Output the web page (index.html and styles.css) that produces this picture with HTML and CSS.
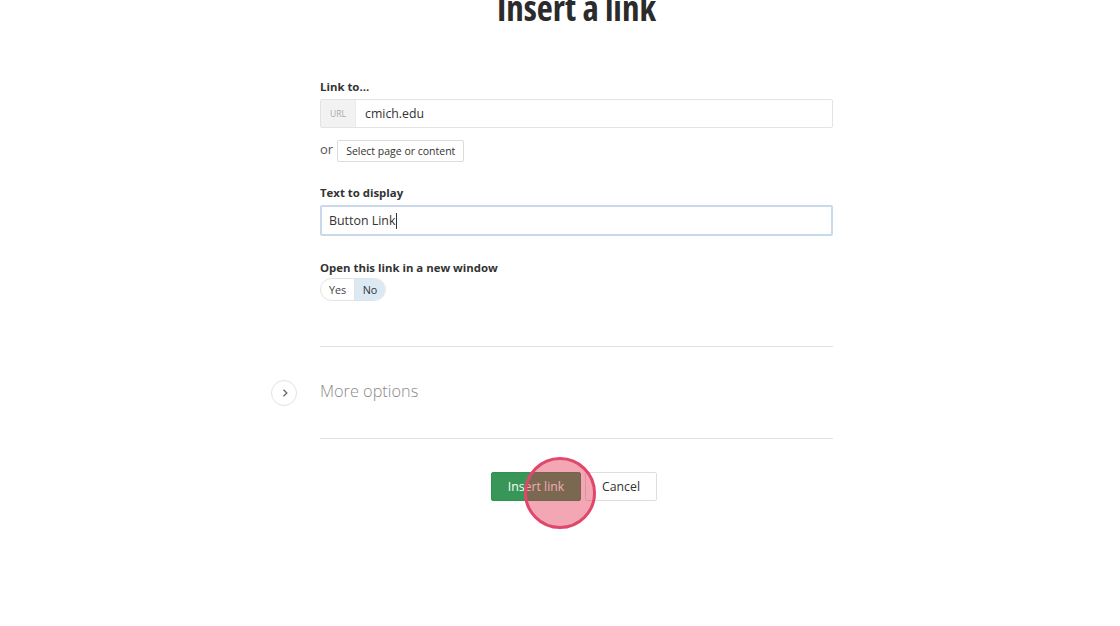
FILE: index.html
```html
<!DOCTYPE html>
<html>
<head>
<meta charset="utf-8">
<link rel="stylesheet" href="styles.css">
</head>
<body>
<div class="page">
  <h1 class="title">Insert a link</h1>
  <div class="form">
    <div class="field">
      <label class="label">Link to...</label>
      <div class="input-group">
        <span class="addon">URL</span>
        <span class="input-text">cmich.edu</span>
      </div>
      <div class="or-row">
        <span class="or">or</span>
        <span class="small-btn">Select page or content</span>
      </div>
    </div>
    <div class="field field-2">
      <label class="label">Text to display</label>
      <div class="input focused"><span class="input-text">Button Link</span><span class="caret"></span></div>
    </div>
    <div class="field field-3">
      <label class="label">Open this link in a new window</label>
      <div class="toggle">
        <span class="opt">Yes</span>
        <span class="opt active">No</span>
      </div>
    </div>
    <div class="more">
      <span class="more-icon">
        <svg width="10" height="10" viewBox="0 0 10 10"><path d="M3.5 1.8 L6.8 5 L3.5 8.2" fill="none" stroke="#666" stroke-width="1.3"/></svg>
      </span>
      <span class="more-text">More options</span>
    </div>
    <div class="actions">
      <span class="btn btn-primary">Insert link</span>
      <span class="btn btn-default">Cancel</span>
      <span class="click-marker"></span>
    </div>
  </div>
</div>
</body>
</html>
```

FILE: styles.css
```css
html, body {
  margin: 0;
  padding: 0;
  background: #fff;
}
body {
  font-family: "Open Sans", "Liberation Sans", sans-serif;
  color: #333;
  width: 1120px;
  height: 626px;
  overflow: hidden;
}
.page {
  display: flex;
  flex-direction: column;
  align-items: center;
  padding-left: 33px;
}
.title {
  margin: -14px 0 0 0;
  font-size: 35px;
  font-weight: 700;
  font-stretch: 75%;
  line-height: 44px;
  color: #2b2b2b;
}
.form {
  width: 513px;
  margin-top: 48px;
  position: relative;
}
.field {
  display: flex;
  flex-direction: column;
}
.label {
  font-size: 11.4px;
  font-weight: 700;
  line-height: 18px;
  color: #333;
  margin-bottom: 3px;
}
.input-group {
  display: flex;
  height: 29px;
  border: 1px solid #e3e3e3;
  border-radius: 2px;
  box-sizing: border-box;
}
.addon {
  width: 34px;
  background: #f2f2f2;
  color: #aaa;
  font-size: 8.5px;
  display: flex;
  align-items: center;
  justify-content: center;
  border-right: 1px solid #eaeaea;
}
.input-group .input-text {
  padding-left: 9px;
  font-size: 12.3px;
  line-height: 27px;
  color: #333;
}
.or-row {
  display: flex;
  align-items: center;
  margin-top: 12px;
  height: 22px;
}
.or {
  font-size: 13px;
  color: #555;
  margin-right: 4px;
  line-height: 16px;
  margin-top: -4px;
}
.small-btn {
  font-size: 10.5px;
  border: 1px solid #dcdcdc;
  border-radius: 2px;
  padding: 0 8px;
  height: 22px;
  line-height: 20px;
  box-sizing: border-box;
  color: #333;
}
.field-2 {
  margin-top: 22px;
}
.input {
  height: 31px;
  box-sizing: border-box;
  border: 1px solid #ccc;
  border-radius: 2px;
  display: flex;
  align-items: center;
  padding-left: 8px;
}
.input.focused {
  border: 2px solid #cad9ea;
  padding-left: 7px;
}
.input .input-text {
  font-size: 12.4px;
  color: #333;
}
.caret {
  width: 1px;
  height: 16px;
  background: #333;
  margin-left: 1px;
}
.field-3 {
  margin-top: 23px;
}
.field-3 .label {
  margin-bottom: 1px;
}
.toggle {
  display: flex;
  width: 66px;
  height: 23px;
  border: 1px solid #e3e3e3;
  border-radius: 12px;
  overflow: hidden;
  box-sizing: border-box;
}
.opt {
  font-size: 10.8px;
  color: #444;
  display: flex;
  align-items: center;
  justify-content: center;
}
.opt:first-child {
  width: 33px;
  border-right: 1px solid #e3e3e3;
}
.opt.active {
  flex: 1;
  background: #dbe9f5;
  color: #333;
}
.more {
  margin-top: 45px;
  border-top: 1px solid #e2e2e2;
  border-bottom: 1px solid #e2e2e2;
  height: 93px;
  box-sizing: border-box;
  display: flex;
  align-items: center;
  position: relative;
}
.more-icon {
  position: absolute;
  left: -49px;
  top: 33px;
  width: 26px;
  height: 26px;
  border: 1px solid #e2e2e2;
  border-radius: 50%;
  display: flex;
  align-items: center;
  justify-content: center;
  box-sizing: border-box;
}
.more-icon svg {
  margin-left: 1px;
}
.more-text {
  font-size: 16.3px;
  font-weight: 300;
  color: #8a8a8a;
  margin-top: -3px;
}
.actions {
  margin-top: 33px;
  display: flex;
  justify-content: flex-start;
  padding-left: 171px;
  gap: 4px;
  position: relative;
}
.btn {
  height: 29px;
  box-sizing: border-box;
  font-size: 12.3px;
  display: flex;
  align-items: center;
  justify-content: center;
  border-radius: 2px;
}
.btn-primary {
  width: 90px;
  background: #389758;
  color: #fff;
  border: 1px solid #329050;
}
.btn-default {
  width: 72px;
  background: #fff;
  color: #333;
  border: 1px solid #dedede;
}
.click-marker {
  position: absolute;
  left: 204px;
  top: -15px;
  width: 72px;
  height: 72px;
  box-sizing: border-box;
  border-radius: 50%;
  border: 3px solid #e0476b;
  background: rgba(224, 35, 70, 0.4);
}
```
